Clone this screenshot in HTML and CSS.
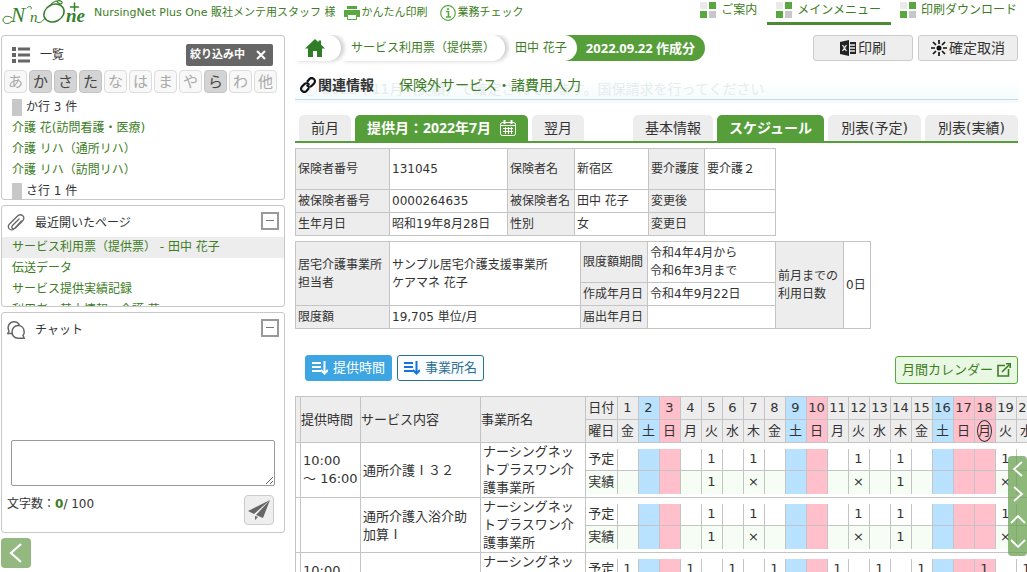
FILE: index.html
```html
<!DOCTYPE html>
<html lang="ja">
<head>
<meta charset="utf-8">
<title>サービス利用票（提供票）</title>
<link rel="stylesheet" href="styles.css">
</head>
<body>
<header class="topbar">
  <svg class="logo" width="90" height="26" viewBox="0 0 90 26" role="img" aria-label="Nn One">
    <g fill="none" stroke="#35802a" stroke-linecap="round">
      <path d="M12 21C9 25 3 24 3 20C3 16 9 15 12 18" stroke-width="1"/>
      <path d="M27 8C29 5 33 7 31 9M37 22C40 24 43 21 45 18" stroke-width="1"/>
      <path d="M50 6C54 -1 63 0 62 3C61 5 57 3 57 1" stroke-width="1.200"/>
      <ellipse cx="54" cy="13" rx="10.500" ry="8.500" transform="rotate(-28 54 13)" stroke-width="1.500"/>
      <path d="M74.500 3V11M70.500 7H78.500" stroke-width="1.500"/>
    </g>
    <g class="logo-text"><text x="11" y="22" font-size="21">N</text><text x="30" y="22" font-size="15">n</text><text x="66" y="22" font-size="19" font-weight="bold">ne</text></g>
  </svg>
  <span class="user">NursingNet Plus One 販社メンテ用スタッフ 様</span>
  <a href="#" class="tool">
    <svg width="16" height="16" viewBox="0 0 16 16"><path fill="#59a83f" d="M3 1h10v3H3zM0 5h16v7h-3V9H3v3H0z"/><path fill="#fff" stroke="#59a83f" d="M3.500 9.500h9v5h-9z"/></svg>かんたん印刷</a>
  <a href="#" class="tool check">
    <svg width="16" height="16" viewBox="0 0 16 16"><circle cx="8" cy="8" r="7.300" fill="none" stroke="#59a83f" stroke-width="1.200"/><path fill="none" stroke="#59a83f" stroke-width="1.600" d="M6 6.500h2.500v5M6 12h5M8 3v2"/></svg>業務チェック</a>
  <nav class="menu">
    <a href="#"><i class="tiles"></i>ご案内</a>
    <a href="#" class="current"><i class="tiles"></i>メインメニュー</a>
    <a href="#"><i class="tiles"></i>印刷ダウンロード</a>
  </nav>
</header>

<div class="layout">
  <aside class="side">
    <section class="panel people">
      <div class="people-head">
        <svg width="18" height="16" viewBox="0 0 18 16" fill="#666"><path d="M0 0h4v4H0zM6 .5h12v3H6zM0 6h4v4H0zM6 6.500h12v3H6zM0 12h4v4H0zM6 12.500h12v3H6z"/></svg>
        <h2>一覧</h2>
        <button class="filter">絞り込み中<svg width="10" height="10" viewBox="0 0 10 10"><path d="M1 1l8 8M9 1l-8 8" stroke="#fff" stroke-width="2"/></svg></button>
      </div>
      <div class="kana">
        <button>あ</button><button class="on">か</button><button class="on">さ</button><button class="on">た</button><button>な</button><button>は</button><button>ま</button><button>や</button><button class="on">ら</button><button>わ</button><button>他</button>
      </div>
      <ul class="links">
        <li class="group">か行 3 件</li>
        <li><a href="#">介護 花(訪問看護・医療)</a></li>
        <li><a href="#">介護 リハ（通所リハ）</a></li>
        <li><a href="#">介護 リハ（訪問リハ）</a></li>
        <li class="group">さ行 1 件</li>
      </ul>
    </section>

    <section class="panel recent">
      <div class="panel-head">
        <svg width="18" height="18" viewBox="0 0 18 18" fill="none" stroke="#666" stroke-width="1.300" stroke-linecap="round"><path d="M14.500 7L7.500 14.500C4 18-1 13.500 2.500 10L10 2.500C14-1.500 19.500 3 15.500 7L8.500 14C6 16 3.500 13.500 5.500 11.500L12 5"/></svg>
        <h2>最近開いたページ</h2>
        <button class="fold" aria-label="閉じる"></button>
      </div>
      <ul class="links">
        <li class="here"><a href="#">サービス利用票（提供票） - 田中 花子</a></li>
        <li><a href="#">伝送データ</a></li>
        <li><a href="#">サービス提供実績記録</a></li>
        <li><a href="#">利用者 - 基本情報 - 介護 花</a></li>
      </ul>
    </section>

    <section class="panel chat">
      <div class="panel-head">
        <svg width="18" height="18" viewBox="0 0 18 18" fill="none" stroke="#666" stroke-width="1.500"><path d="M4.500 12.500H.8L2 10C-.5 5 3 .8 7 .8C9.500 .8 11.500 2 12.500 4.200M17.200 17.200H11C7 17.200 5 14 5 11C5 7 8 4.500 11 4.500C15 4.500 17.200 7.500 17.200 11C17.200 13 16.500 14 16 14.500z"/></svg>
        <h2>チャット</h2>
        <button class="fold" aria-label="閉じる"></button>
      </div>
      <textarea class="message" aria-label="メッセージ"></textarea>
      <div class="chat-foot">
        <span>文字数：<b>0</b>/ 100</span>
        <button class="send" aria-label="送信"><svg width="22" height="20" viewBox="0 0 22 20" fill="#666"><path d="M22 0L0 11l6 3zM22 0L8 15l7 3zM7 16v4l3-3z"/></svg></button>
      </div>
    </section>
    <button class="back" aria-label="戻る"><svg width="14" height="20" viewBox="0 0 14 20"><path d="M12 1L2 10l10 9" fill="none" stroke="#fff" stroke-width="2.200"/></svg></button>
  </aside>

  <main class="main">
    <div class="title-row">
      <nav class="crumbs">
        <a href="#" class="home" aria-label="ホーム"><svg width="20" height="18" viewBox="0 0 20 18"><path fill="#2f7d26" d="M10 0l3.500 3.200V1.500H16v4L20 9.500h-3V18h-5v-6H8v6H3V9.500H0z"/></svg></a>
        <a href="#" class="page">サービス利用票（提供票）</a>
        <a href="#" class="person">田中 花子</a>
        <span class="stamp">2022.09.22 作成分</span>
      </nav>
      <div class="actions">
        <button><svg width="16" height="16" viewBox="0 0 16 16"><path fill="#222" d="M0 2l9-2v16l-9-2zM10 2h6v12h-6z"/><path stroke="#eee" stroke-width="1.300" d="M2.500 5l4 6M6.500 5l-4 6M10 5h5M10 8h5M10 11h5"/></svg>印刷</button>
        <button><svg width="16" height="16" viewBox="0 0 16 16"><circle cx="8" cy="8" r="2.500" fill="#111"/><path stroke="#111" stroke-width="1.700" d="M8 0v4M8 12v4M0 8h4M12 8h4M2 2l3 3M11 11l3 3M14 2l-3 3M5 11l-3 3"/></svg>確定取消</button>
      </div>
    </div>

    <div class="related">
      <p class="notice"><svg width="14" height="14" viewBox="0 0 14 14" fill="none" stroke="currentColor"><circle cx="7" cy="7" r="6.500"/><path d="M7 3v1M7 6v5"/></svg>2022年11月（実績）で確定されています。国保請求を行ってください</p>
      <div class="related-links">
        <svg width="16" height="16" viewBox="0 0 16 16" fill="none" stroke="#111" stroke-width="2.200"><path d="M7 5l2.500-3C12-.5 17 3 14 6.500L11.500 9C10 10.500 7.500 9.500 7 8M9 11l-2.500 3C4 16.500-1 13 2 9.500L4.500 7C6 5.500 8.500 6.500 9 8"/></svg>
        <strong>関連情報</strong>
        <a href="#">保険外サービス・諸費用入力</a>
      </div>
    </div>

    <nav class="tabs">
      <a href="#">前月</a>
      <a href="#" class="active month">提供月：2022年7月<svg width="16" height="16" viewBox="0 0 16 16" fill="none" stroke="#fff"><rect x=".5" y="2.500" width="15" height="13" rx="2"/><path d="M.5 5.500h15M3 8.500h10M3 11.500h10M5.500 7v7M8.500 7v7M11.500 7v7"/><path d="M4.500 0v4M11.500 0v4" stroke-width="2"/></svg></a>
      <a href="#">翌月</a>
      <a href="#" class="first-view">基本情報</a>
      <a href="#" class="active">スケジュール</a>
      <a href="#" class="sheet">別表(予定)</a>
      <a href="#" class="sheet">別表(実績)</a>
    </nav>

    <table class="info insured">
      <colgroup><col class="w94"><col class="w118"><col class="w67"><col class="w74"><col class="w56"><col class="w71"></colgroup>
      <tr class="tall"><th>保険者番号</th><td>131045</td><th>保険者名</th><td>新宿区</td><th>要介護度</th><td>要介護２</td></tr>
      <tr><th>被保険者番号</th><td>0000264635</td><th>被保険者名</th><td>田中 花子</td><th>変更後</th><td></td></tr>
      <tr><th>生年月日</th><td>昭和19年8月28日</td><th>性別</th><td>女</td><th>変更日</th><td></td></tr>
    </table>

    <table class="info office">
      <colgroup><col class="w94"><col class="w191"><col class="w67"><col class="w128"><col class="w68"><col class="w27"></colgroup>
      <tr class="tall"><th rowspan="2">居宅介護事業所<br>担当者</th><td rowspan="2">サンプル居宅介護支援事業所<br>ケアマネ 花子</td><th>限度額期間</th><td>令和4年4月から<br>令和6年3月まで</td><th rowspan="3">前月までの<br>利用日数</th><td rowspan="3">0日</td></tr>
      <tr><th>作成年月日</th><td>令和4年9月22日</td></tr>
      <tr><th>限度額</th><td>19,705 単位/月</td><th>届出年月日</th><td></td></tr>
    </table>

    <div class="sortbar">
      <button class="sort selected"><svg width="16" height="14" viewBox="0 0 16 14" fill="none" stroke="currentColor" stroke-width="2"><path d="M0 2h9M0 6h9M0 10h9M12.500 0v12M9 9l3.500 3.500L16 9"/></svg>提供時間</button>
      <button class="sort"><svg width="16" height="14" viewBox="0 0 16 14" fill="none" stroke="#1672e0" stroke-width="2"><path d="M0 2h9M0 6h9M0 10h9M12.500 0v12M9 9l3.500 3.500L16 9"/></svg>事業所名</button>
      <button class="calendar">月間カレンダー<svg width="14" height="14" viewBox="0 0 14 14" fill="none" stroke="#3d7d24" stroke-width="1.600"><path d="M8 2.500H1v10.500h10.500V6M5 9l7-7M9 .8h4.200V5"/></svg></button>
    </div>

    <table class="schedule">
      <colgroup><col class="c-mark"><col class="c-time"><col class="c-service"><col class="c-office"><col></colgroup>
      <thead><tr><th></th><th>提供時間</th><th>サービス内容</th><th>事業所名</th><th class="days-cell"><table class="days" id="calendar-head"></table></th></tr></thead>
      <tbody>
        <tr><td></td><td class="time">10:00<br>～ 16:00</td><td class="service">通所介護Ⅰ３２</td><td>ナーシングネットプラスワン介護事業所</td><td class="days-cell"><table class="days" data-plan="5 7 12 14 19" data-done="5 14" data-absent="7 12 19"></table></td></tr>
        <tr><td></td><td class="time"></td><td class="service">通所介護入浴介助加算Ⅰ</td><td>ナーシングネットプラスワン介護事業所</td><td class="days-cell"><table class="days" data-plan="5 7 12 14 19" data-done="5 14" data-absent="7 12 19"></table></td></tr>
        <tr><td></td><td class="time">10:00<br>～ 16:00</td><td class="service"></td><td>ナーシングネットプラスワン介護事業所</td><td class="days-cell"><table class="days" data-plan="1 4 6 8 11 13 15 18 20" data-done="" data-absent=""></table></td></tr>
      </tbody>
    </table>
  </main>
</div>

<div class="pager">
  <button aria-label="左へ"><svg width="16" height="16" viewBox="0 0 16 16"><path d="M12 1L4 8l8 7"/></svg></button>
  <button aria-label="右へ"><svg width="16" height="16" viewBox="0 0 16 16"><path d="M4 1l8 7-8 7"/></svg></button>
  <button aria-label="上へ"><svg width="16" height="16" viewBox="0 0 16 16"><path d="M1 12l7-7 7 7"/></svg></button>
  <button aria-label="下へ"><svg width="16" height="16" viewBox="0 0 16 16"><path d="M1 4l7 7 7-7"/></svg></button>
</div>
<script src="script.js"></script>
</body>
</html>
```
FILE: styles.css
```css
* { box-sizing: border-box; }
body {
  margin: 0;
  height: 100vh;
  overflow: hidden;
  display: flex;
  flex-direction: column;
  background: #fff;
  color: #333;
  font: 12px/18px "DejaVu Sans", "Noto Sans CJK JP", sans-serif;
}
a { color: #3d7d24; text-decoration: none; }
button, textarea { font: inherit; color: inherit; margin: 0; padding: 0; }
button { display: flex; align-items: center; justify-content: center; border: 0; }
svg { flex: none; }
h2, p, ul { margin: 0; padding: 0; font-size: 12px; font-weight: normal; list-style: none; }

.topbar { display: flex; height: 25px; flex: none; align-items: center; color: #3d7d24; font-size: 11px; white-space: nowrap; }
.logo { margin-right: 4px; overflow: visible; }
.logo-text { fill: #35802a; font-family: "Liberation Serif", serif; font-style: italic; }
.tool { display: flex; align-items: center; gap: 2px; margin-left: 8px; }
.check { margin-left: 12px; }
.menu { display: flex; margin-left: auto; align-self: stretch; font-size: 12px; }
.menu a { display: flex; align-items: center; gap: 5px; padding: 0 10px 2px 9px; border-bottom: 3px solid transparent; }
.menu a.current { border-color: #4c8a35; }
.tiles {
  width: 16px;
  height: 16px;
  background:
    linear-gradient(#eaeaea, #eaeaea) 0 0 / 7px 7px no-repeat,
    linear-gradient(#59a83f, #59a83f) 100% 0 / 7px 7px no-repeat,
    linear-gradient(#59a83f, #59a83f) 0 100% / 7px 7px no-repeat,
    linear-gradient(#c8c8cc, #c8c8cc) 100% 100% / 7px 7px no-repeat;
}

.layout { display: flex; flex: 1; min-height: 0; padding: 10px 0 0 1px; }
.side { width: 284px; flex: none; display: flex; flex-direction: column; gap: 5px; }
.panel { border: 1px solid #c8c8c8; border-radius: 3px; overflow: hidden; flex: none; }
.people { height: 165px; }
.recent { height: 102px; }
.chat { height: 221px; display: flex; flex-direction: column; }
.people-head { display: flex; align-items: center; gap: 10px; height: 34px; padding: 4px 11px 0 10px; }
.filter { margin-left: auto; gap: 11px; height: 22px; padding: 0 7px 0 4px; background: #666; color: #fff; border-radius: 2px; font-size: 11px; font-weight: bold; }
.kana { display: flex; gap: 2px; padding: 0 2px; }
.kana button { width: 23px; height: 23px; border: 1px solid #ddd; border-radius: 4px; background: #f8f8f8; color: #aaa; font-size: 15px; }
.kana .on { background: #d4d4d4; border-color: #c4c4c4; color: #444; }
.links li { height: 21px; padding: 0 10px; line-height: 20px; white-space: nowrap; }
.people .links { padding-top: 4px; }
.group::before { content: ""; display: inline-block; width: 10px; height: 17px; margin-right: 4px; background: #c8c8c8; vertical-align: middle; }
.here { background: #ededed; }
.panel-head { display: flex; align-items: center; gap: 10px; height: 31px; padding: 2px 5px 0; flex: none; }
.fold { width: 18px; height: 18px; margin: 0 0 4px auto; background: #fff; border: 2px solid #999; }
.fold::before { content: ""; width: 8px; height: 1px; background: #777; }
.message { margin: auto 9px 0; height: 46px; border: 1px solid #999; border-radius: 2px; resize: vertical; flex: none; }
.chat-foot { display: flex; justify-content: space-between; padding: 9px 10px 7px 5px; }
.chat-foot b { color: #3d7d24; }
.send { width: 30px; height: 30px; background: #eee; border: 1px solid #ccc; border-radius: 4px; }
.back { width: 30px; height: 30px; background: #93b981; border-radius: 4px; flex: none; }

.main { flex: 1; min-width: 0; overflow: hidden; padding-left: 10px; }
.title-row { display: flex; justify-content: space-between; padding-right: 9px; }
.crumbs { display: flex; height: 26px; white-space: nowrap; }
.crumbs > * { display: flex; align-items: center; background: #fff; border-radius: 0 13px 13px 0; }
.crumbs a { box-shadow: 3px 0 4px #ccc; position: relative; }
.crumbs .home { z-index: 3; padding: 0 16px 0 10px; }
.crumbs .page { z-index: 2; padding: 0 10px; }
.crumbs .person { z-index: 1; padding: 0 10px; box-shadow: none; }
.crumbs .stamp { margin-left: -13px; padding: 0 10px 0 22px; background: #559e39; color: #fff; font: bold 13px/18px "Open Sans", "Noto Sans CJK JP", sans-serif; }
.actions { display: flex; gap: 5px; }
.actions button { width: 100px; height: 26px; gap: 2px; border: 1px solid #ccc; border-radius: 3px; background: #eee; font-size: 14px; }

.related { display: grid; margin: 18px 9px 0 0; height: 24px; font-size: 14px; white-space: nowrap; background: linear-gradient(#fff, #f3fbfc); }
.related > * { grid-area: 1 / 1; }
.notice { display: flex; align-items: center; gap: 5px; height: 21px; padding-left: 8px; font-size: 14px; color: #e4eced; border-bottom: 1px solid #c5dce0; }
.related-links { display: flex; align-items: center; height: 12px; padding-left: 5px; position: relative; }
.related-links strong { margin: 0 25px 0 2px; font-weight: bold; }

.tabs { display: flex; gap: 4px; margin: 12px 9px 0 0; padding-left: 4px; border-bottom: 2px solid #559e39; font-size: 14px; white-space: nowrap; }
.tabs a { display: flex; align-items: center; justify-content: center; height: 26px; padding: 0 12px; background: #ededed; color: #333; border-radius: 5px 5px 0 0; }
.tabs .active { background: #559e39; color: #fff; font-weight: bold; }
.tabs .month { gap: 9px; font-family: "Open Sans", "Noto Sans CJK JP", sans-serif; }
.tabs .sheet { padding: 0 13px; }
.tabs .first-view { margin-left: auto; }

table { border-collapse: collapse; table-layout: fixed; }
th, td { font-weight: normal; text-align: left; }
.info { margin-top: 5px; }
.insured { width: 481px; }
.office { width: 576px; }
.info th, .info td { height: 23px; padding: 2px; border: 1px solid #c4c4c4; white-space: nowrap; }
.info .tall > [rowspan="2"] { height: 64px; }
.info .tall > :not([rowspan]) { height: 41px; }
.info th { background: #ededed; }
.w27 { width: 27px; } .w56 { width: 56px; } .w67 { width: 67px; } .w68 { width: 68px; }
.w71 { width: 71px; } .w74 { width: 74px; } .w94 { width: 94px; } .w118 { width: 118px; }
.w128 { width: 128px; } .w191 { width: 191px; }

.sortbar { display: flex; gap: 5px; padding: 26px 9px 0 10px; }
.sort { height: 26px; padding: 0 6px; gap: 5px; border: 1px solid #2d6e94; border-radius: 3px; background: #fafdff; color: #2d6e94; font-size: 13px; }
.sort.selected { background: #3ea5e3; border-color: #3ea5e3; color: #fff; }
.calendar { margin: 1px 0 0 auto; height: 28px; padding: 0 6px; gap: 4px; border: 1px solid #59a83f; border-radius: 3px; background: #e9f8e2; color: #3d7d24; font-size: 13px; }

.schedule { width: 973px; margin-top: 12px; font-size: 13px; }
.c-mark { width: 5px; } .c-time { width: 60px; } .c-service { width: 120px; } .c-office { width: 105px; }
.schedule > * > tr > * { height: 46px; padding: 0; border: 1px solid #c4c4c4; }
.schedule > tbody > tr > td { height: 55px; padding: 0 2px; }
.schedule th { background: #ededed; }
.schedule .time { white-space: nowrap; }
.schedule .service { font-family: "Noto Sans CJK JP", sans-serif; }
.schedule > * > tr > .days-cell { padding: 0; }
.days { width: 682px; }
.days th { width: 31px; height: 22px; padding: 0; background: #fff; text-align: center; }
.days td { width: 21px; height: 22px; padding: 0; border-left: 1px solid #c4c4c4; text-align: center; }
.days tr + tr > * { height: 23px; border-top: 1px solid #c4c4c4; }
.days tr + tr > * { background: #f5fdf5; }
.schedule thead .days tr > * { background: #ededed; }
.schedule .days tr > .sat { background: #b8e2ff; }
.schedule .days tr > .sun { background: #ffc0cb; }
.schedule tbody .days { margin: 5px 0 3px; }
.holiday { display: inline-block; width: 15px; border: 1px solid #333; border-radius: 50%; line-height: 20px; vertical-align: top; }

.pager { position: fixed; right: 0; bottom: 16px; width: 19px; height: 100px; display: grid; border-radius: 4px; background: rgba(105, 160, 80, .75); }
.pager button { background: none; }
.pager path { fill: none; stroke: #fff; stroke-width: 1.8; }
```
FILE: script.js
```javascript
const WEEK = ["金", "土", "日", "月", "火", "水", "木"];
const HOLIDAYS = [18];
const DAYS = Array.from({ length: 31 }, (_, i) => i + 1);

function dayClass(day) {
  const name = WEEK[(day - 1) % 7];
  if (name === "日" || HOLIDAYS.includes(day)) return "sun";
  return name === "土" ? "sat" : "";
}

function row(label, text) {
  const cells = DAYS.map(d => `<td class="${dayClass(d)}">${text(d)}</td>`).join("");
  return `<tr><th>${label}</th>${cells}</tr>`;
}

document.getElementById("calendar-head").innerHTML =
  row("日付", d => d) +
  row("曜日", d => {
    const name = WEEK[(d - 1) % 7];
    return HOLIDAYS.includes(d) ? `<span class="holiday">${name}</span>` : name;
  });

document.querySelectorAll(".days[data-plan]").forEach(table => {
  const list = key => table.dataset[key].split(" ").filter(Boolean).map(Number);
  const plan = list("plan"), done = list("done"), absent = list("absent");
  table.innerHTML =
    row("予定", d => plan.includes(d) ? "1" : "") +
    row("実績", d => done.includes(d) ? "1" : absent.includes(d) ? "×" : "");
});
```
